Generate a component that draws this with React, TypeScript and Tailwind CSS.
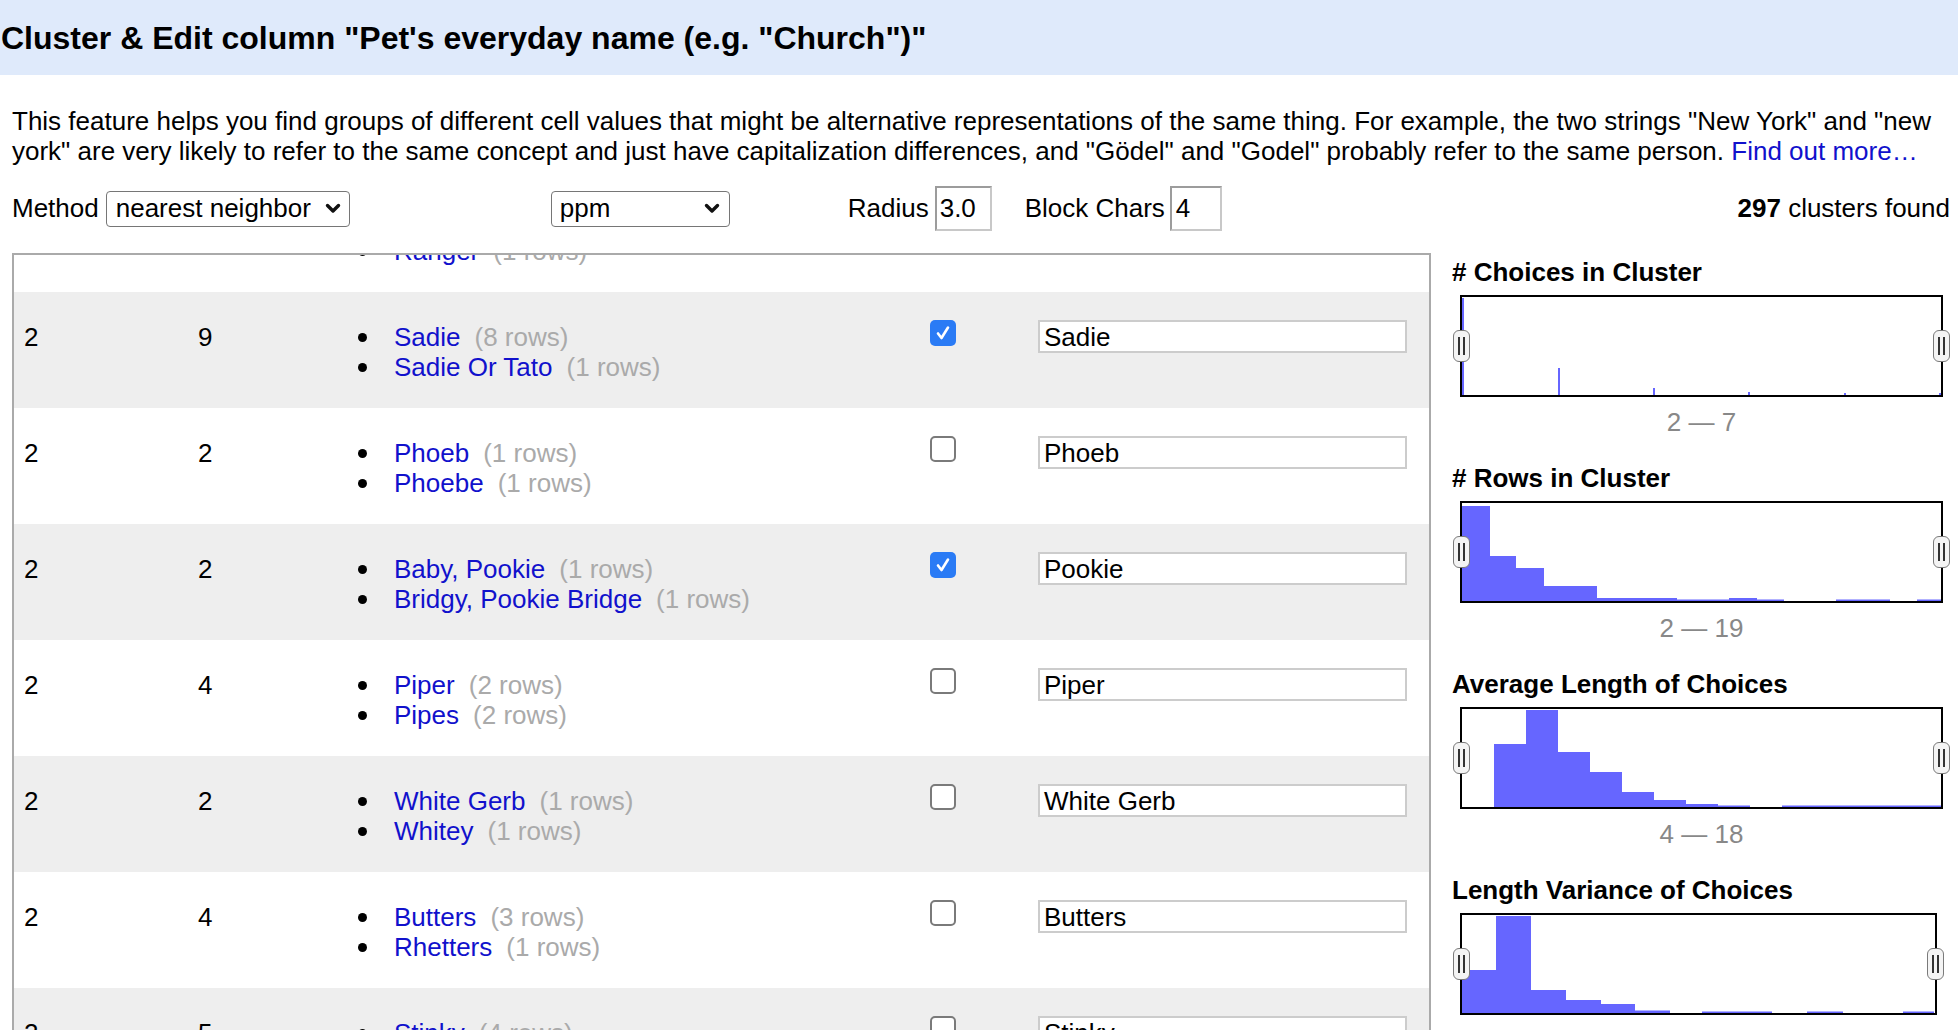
import React, { useLayoutEffect, useRef } from 'react';

type Choice = { name: string; rows: number };
type Cluster = { size: number; rowCount: number; choices: Choice[]; checked: boolean; value: string };
type Bar = [number, number, number];

const clusters: Cluster[] = [
  { size: 2, rowCount: 2, choices: [{ name: 'Rangr', rows: 1 }, { name: 'Ranger', rows: 1 }], checked: false, value: 'Ranger' },
  { size: 2, rowCount: 9, choices: [{ name: 'Sadie', rows: 8 }, { name: 'Sadie Or Tato', rows: 1 }], checked: true, value: 'Sadie' },
  { size: 2, rowCount: 2, choices: [{ name: 'Phoeb', rows: 1 }, { name: 'Phoebe', rows: 1 }], checked: false, value: 'Phoeb' },
  { size: 2, rowCount: 2, choices: [{ name: 'Baby, Pookie', rows: 1 }, { name: 'Bridgy, Pookie Bridge', rows: 1 }], checked: true, value: 'Pookie' },
  { size: 2, rowCount: 4, choices: [{ name: 'Piper', rows: 2 }, { name: 'Pipes', rows: 2 }], checked: false, value: 'Piper' },
  { size: 2, rowCount: 2, choices: [{ name: 'White Gerb', rows: 1 }, { name: 'Whitey', rows: 1 }], checked: false, value: 'White Gerb' },
  { size: 2, rowCount: 4, choices: [{ name: 'Butters', rows: 3 }, { name: 'Rhetters', rows: 1 }], checked: false, value: 'Butters' },
  { size: 2, rowCount: 5, choices: [{ name: 'Stinky', rows: 4 }, { name: 'Stinki', rows: 1 }], checked: false, value: 'Stinky' },
];

// bars: [x, width, height] inside the plot area
const facets: { title: string; range: string; width: string; bars: Bar[] }[] = [
  {
    title: '# Choices in Cluster',
    range: '2 \u2014 7',
    width: 'w-[483px]',
    bars: [[0, 2, 97], [96, 2, 27], [191, 2, 7], [286, 2, 3], [382, 2, 2], [477, 2, 2]],
  },
  {
    title: '# Rows in Cluster',
    range: '2 \u2014 19',
    width: 'w-[483px]',
    bars: [[0, 28, 95], [28, 26, 45], [54, 28, 33], [82, 53, 15], [135, 80, 3], [215, 52, 1.5], [267, 28, 3], [295, 27, 1.5], [374, 54, 1.5], [455, 24, 1.5]],
  },
  {
    title: 'Average Length of Choices',
    range: '4 \u2014 18',
    width: 'w-[483px]',
    bars: [[32, 32, 63], [64, 32, 97], [96, 32, 55], [128, 32, 35], [160, 32, 15], [192, 32, 7], [224, 32, 3], [256, 32, 1.5], [320, 159, 1.5]],
  },
  {
    title: 'Length Variance of Choices',
    range: '0 \u2014 6',
    width: 'w-[477px]',
    bars: [[0, 34, 43], [34, 35, 97], [69, 35, 23], [104, 35, 13], [139, 34, 9], [173, 35, 2.5], [240, 70, 1.5], [345, 36, 1.5], [441, 31, 1.5]],
  },
];

const Chevron = () => (
  <svg width="16" height="11" viewBox="0 0 16 11" className="shrink-0">
    <path d="M2.5 2.5 L8 8 L13.5 2.5" fill="none" stroke="#111" strokeWidth="3.4" strokeLinecap="round" strokeLinejoin="round" />
  </svg>
);

const Handle = ({ side }: { side: 'left' | 'right' }) => (
  <div
    className={`absolute top-1/2 -translate-y-1/2 flex h-[32px] w-[17px] items-center justify-center gap-[3px] rounded-[6px] border-[1.5px] border-[#7a7a7a] bg-[#f4f4f4] ${
      side === 'left' ? 'left-[-9px]' : 'right-[-9px]'
    }`}
  >
    <span className="h-[18px] w-[2px] bg-[#333]" />
    <span className="h-[18px] w-[2px] bg-[#333]" />
  </div>
);

const Facet = ({ title, range, width, bars }: { title: string; range: string; width: string; bars: Bar[] }) => (
  <div className="mb-[26px]">
    <div className="text-[26px] font-bold leading-[30px]">{title}</div>
    <div className={`relative ml-[8px] mt-[8px] h-[102px] border-2 border-black ${width}`}>
      <svg className="block h-full w-full" preserveAspectRatio="none">
        {bars.map(([x, w, h], i) => (
          <rect key={i} x={x} y={98 - h} width={w} height={h} fill="#6666ff" />
        ))}
      </svg>
      <Handle side="left" />
      <Handle side="right" />
    </div>
    <div className={`ml-[8px] mt-[10px] text-center text-[26px] leading-[30px] text-[#888] ${width}`}>{range}</div>
  </div>
);

const CheckBox = ({ checked }: { checked: boolean }) =>
  checked ? (
    <div className="flex h-[26px] w-[26px] items-center justify-center rounded-[5px] bg-[#2a7bf5]">
      <svg width="18" height="18" viewBox="0 0 18 18">
        <path d="M4 9.5 L7.5 14 L14 3.5" fill="none" stroke="#fff" strokeWidth="2.6" strokeLinecap="round" strokeLinejoin="round" />
      </svg>
    </div>
  ) : (
    <div className="h-[26px] w-[26px] rounded-[5px] border-2 border-[#7a7a7a] bg-white" />
  );

const ClusterRow = ({ c, index }: { c: Cluster; index: number }) => (
  <div className={`flex h-[116px] pt-[28px] ${index % 2 === 1 ? 'bg-[#eeeeee]' : 'bg-white'}`}>
    <div className="w-[174px] pl-[10px] pt-[2px] leading-[30px]">{c.size}</div>
    <div className="w-[170px] pl-[10px] pt-[2px] leading-[30px]">{c.rowCount}</div>
    <div className="w-[572px] pt-[2px]">
      {c.choices.map((ch) => (
        <div key={ch.name} className="flex h-[30px] items-center whitespace-nowrap leading-[30px]">
          <span className="h-[9px] w-[9px] shrink-0 rounded-full bg-black" />
          <span className="ml-[27px] text-[#1111cc]">{ch.name}</span>
          <span className="ml-[14px] text-[#aaaaaa]">({ch.rows} rows)</span>
        </div>
      ))}
    </div>
    <div className="w-[108px]">
      <CheckBox checked={c.checked} />
    </div>
    <div className="flex h-[33px] w-[369px] items-center border-2 border-[#cccccc] bg-white pl-[4px] leading-[30px]">
      {c.value}
    </div>
  </div>
);

export default function App() {
  const scrollRef = useRef<HTMLDivElement>(null);

  useLayoutEffect(() => {
    if (scrollRef.current) scrollRef.current.scrollTop = 79;
  }, []);

  return (
    <div className="h-[1030px] overflow-hidden bg-white font-['Liberation_Sans',Arial,sans-serif] text-[26px] text-black">
      <div className="flex h-[75px] items-center bg-[#dfeafb] pl-[1px]">
        <h1 className="text-[32px] font-bold leading-[36px]">Cluster &amp; Edit column "Pet's everyday name (e.g. "Church")"</h1>
      </div>

      <p className="mt-[31px] whitespace-nowrap pl-[12px] text-[26px] leading-[30px]">
        This feature helps you find groups of different cell values that might be alternative representations of the same thing. For example, the two strings "New York" and "new
        <br />
        york" are very likely to refer to the same concept and just have capitalization differences, and "Gödel" and "Godel" probably refer to the same person.{' '}
        <span className="text-[#1111cc]">Find out more…</span>
      </p>

      <div className="mt-[20px] flex h-[45px] items-center pl-[12px] pr-[8px]">
        <span>Method</span>
        <div className="ml-[7px] flex h-[36px] w-[244px] items-center justify-between rounded-[4px] border border-[#767676] pl-[9px] pr-[8px]">
          <span>nearest neighbor</span>
          <Chevron />
        </div>
        <div className="ml-[201px] flex h-[36px] w-[179px] items-center justify-between rounded-[4px] border border-[#767676] pl-[8px] pr-[9px]">
          <span>ppm</span>
          <Chevron />
        </div>
        <span className="ml-[118px]">Radius</span>
        <div className="ml-[6px] flex h-[45px] w-[57px] items-center border-2 border-[#c8c8c8] border-l-[#9c9c9c] border-t-[#9c9c9c] pl-[3px]">
          3.0
        </div>
        <span className="ml-[33px]">Block Chars</span>
        <div className="ml-[5px] flex h-[45px] w-[52px] items-center border-2 border-[#c8c8c8] border-l-[#9c9c9c] border-t-[#9c9c9c] pl-[4px]">
          4
        </div>
        <span className="ml-auto">
          <b>297</b> clusters found
        </span>
      </div>

      <div className="mt-[22px] flex">
        <div ref={scrollRef} className="ml-[12px] h-[800px] w-[1419px] shrink-0 overflow-hidden border-2 border-[#aaaaaa]">
          {clusters.map((c, i) => (
            <ClusterRow key={i} c={c} index={i} />
          ))}
        </div>
        <div className="ml-[21px] pt-[4px]">
          {facets.map((f) => (
            <Facet key={f.title} {...f} />
          ))}
        </div>
      </div>
    </div>
  );
}
